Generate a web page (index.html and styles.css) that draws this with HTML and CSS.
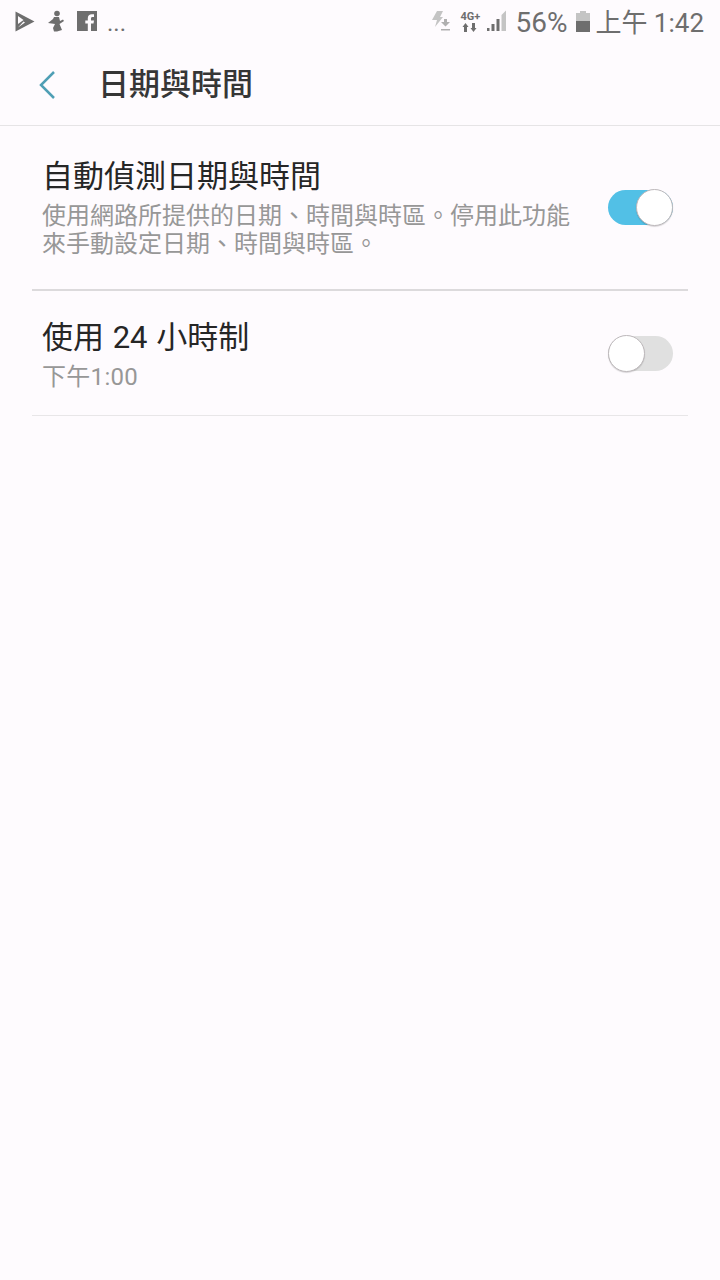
FILE: index.html
```html
<!DOCTYPE html>
<html lang="zh-Hant">
<head>
    <meta charset="UTF-8">
    <meta name="viewport" content="width=device-width, initial-scale=1.0">
    <title>日期與時間</title>
    <link rel="stylesheet" href="styles.css">
</head>
<body>
    <div class="status-bar">
        <div class="status-left">
            <svg class="icon-play" width="20" height="21" viewBox="0 0 20 21"><path d="M0.500 0.500 L19.500 10.500 L0.500 20.500 Z M3 5 V13 L8.500 9 Z M3 16.500 L10 11.500 L8.500 10.500 Z" fill="#6e6e6e" fill-rule="evenodd"/></svg>
            <svg class="icon-run" width="18" height="22" viewBox="0 0 18 22"><circle cx="10" cy="3.500" r="2.800" fill="#6e6e6e"/><path d="M7 7 H12 L13 11 L16 9.500 L17 11 L12.500 14 L15 20 L10 21.500 H7 L6 18 L8 14 L1 13 L6 9 Z" fill="#6e6e6e"/></svg>
            <svg class="icon-fb" width="20" height="20" viewBox="0 0 20 20"><path d="M0 0 H20 V20 H14 V12.500 H16.500 L17 9.500 H14 V7.500 C14 6.600 14.400 6 15.500 6 H17 V3.300 C16.300 3.200 15.500 3.200 14.800 3.200 C12.400 3.200 10.800 4.600 10.800 7.200 V9.500 H8.300 V12.500 H10.800 V20 H0 Z" fill="#6e6e6e"/></svg>
            <span class="dots">...</span>
        </div>
        <div class="status-right">
            <svg width="20" height="22" viewBox="0 0 20 22"><path d="M6 1 H12 L9 7 H12 L4 17 L6 10 H1 Z" fill="#c4c4c4"/><path d="M13 9 H16 V12 H19 L14.500 16.500 L10 12 H13 Z" fill="#b0b0b0"/><rect x="10" y="19" width="9" height="1.500" fill="#b0b0b0"/></svg>
            <div class="net-type">
                <span class="net-label">4G+</span>
                <svg width="16" height="9" viewBox="0 0 16 9"><path d="M2 9 V4 H0.500 L3.500 0 L6.500 4 H5 V9 Z M10 0 V5 H8.500 L11.500 9 L14.500 5 H13 V0 Z" fill="#6e6e6e"/></svg>
            </div>
            <svg class="signal" width="22" height="22" viewBox="0 0 22 22"><path d="M1 21 V18 H3.500 V21 Z M5.500 21 V14 H8.500 V21 Z M10.500 21 V9 H13.500 V21 Z" fill="#6e6e6e"/><path d="M15.500 21 V5 L20 0.500 V21 Z" fill="#c4c4c4"/></svg>
            <span class="status-text pct">56%</span>
            <div class="battery"><div class="battery-cap"></div><div class="battery-body"><div class="battery-level"></div></div></div>
            <span class="status-text time">上午 1:42</span>
        </div>
    </div>

    <div class="app-bar">
        <svg class="back" width="20" height="30" viewBox="0 0 20 30"><path d="M17 2 L4 15 L17 28" fill="none" stroke="#4f9fb5" stroke-width="2.500"/></svg>
        <h1 class="page-title">日期與時間</h1>
    </div>

    <div class="list">
        <div class="row row-first">
            <div class="row-text">
                <div class="row-title title-auto">自動偵測日期與時間</div>
                <div class="row-sub">使用網路所提供的日期、時間與時區。停用此功能<br>來手動設定日期、時間與時區。</div>
            </div>
            <div class="switch on"><div class="knob"></div></div>
        </div>
        <div class="row row-second">
            <div class="row-text">
                <div class="row-title title-24">使用 24 小時制</div>
                <div class="row-sub sub-time">下午1:00</div>
            </div>
            <div class="switch"><div class="knob"></div></div>
        </div>
    </div>
</body>
</html>
```

FILE: styles.css
```css
body {
    margin: 0;
    width: 720px;
    height: 1280px;
    overflow: hidden;
    background-color: #fefbfe;
    font-family: Roboto, "Noto Sans CJK TC", sans-serif;
}

.status-bar {
    height: 44px;
    display: flex;
    justify-content: space-between;
    align-items: center;
    padding: 0 16px 2px 15px;
    box-sizing: border-box;
}

.status-left, .status-right {
    display: flex;
    align-items: center;
}

.icon-run {
    margin-left: 12px;
}

.icon-fb {
    margin-left: 12px;
}

.dots {
    margin-left: 10px;
    font-size: 24px;
    line-height: 24px;
    color: #6e6e6e;
    margin-top: 4px;
}

.net-type {
    display: flex;
    flex-direction: column;
    align-items: center;
    margin-left: 8px;
    width: 22px;
}

.net-label {
    font-size: 11px;
    line-height: 12px;
    font-weight: 700;
    color: #6e6e6e;
}

.signal {
    margin-left: 5px;
}

.status-text {
    font-size: 26px;
    line-height: 32px;
    color: #6e6e6e;
    margin-left: 7px;
    margin-top: 3px;
}

.pct {
    font-size: 28px;
}

.time {
    margin-left: 5px;
}

.battery {
    margin-left: 9px;
    width: 14px;
    display: flex;
    flex-direction: column;
    align-items: center;
}

.battery-cap {
    width: 6px;
    height: 2px;
    background-color: #c4c4c4;
}

.battery-body {
    width: 14px;
    height: 19px;
    background-color: #c4c4c4;
    display: flex;
    align-items: flex-end;
}

.battery-level {
    width: 100%;
    height: 11px;
    background-color: #6e6e6e;
}

.app-bar {
    height: 82px;
    display: flex;
    align-items: center;
    padding-left: 37px;
    box-sizing: border-box;
    border-bottom: 1px solid #e6e4e6;
}

.page-title {
    margin: 0 0 0 41px;
    font-size: 31px;
    font-weight: 500;
    color: #363636;
    line-height: 40px;
}

.list {
    margin: 0 32px;
}

.row {
    display: flex;
    justify-content: space-between;
    box-sizing: border-box;
    padding-left: 10px;
    padding-right: 15px;
}

.row-first {
    height: 165px;
    padding-top: 31px;
    border-bottom: 2px solid #dcdadc;
}

.row-second {
    height: 125px;
    padding-top: 27px;
    border-bottom: 1px solid #e8e6e8;
}

.row-title {
    font-size: 31px;
    line-height: 40px;
    color: #262626;
}

.title-24 {
    word-spacing: 1px;
}

.row-sub {
    font-size: 24px;
    line-height: 28px;
    color: #979797;
}

.row-first .row-sub {
    margin-top: 5px;
}

.row-second .row-sub {
    margin-top: 5px;
}

.sub-time {
    letter-spacing: 0.3px;
}

.switch {
    position: relative;
    width: 65px;
    height: 35px;
    border-radius: 18px;
    background-color: #e0e0e0;
    flex-shrink: 0;
}

.row-first .switch {
    margin-top: 33px;
}

.row-second .switch {
    margin-top: 18px;
}

.switch.on {
    background-color: #52c0e6;
}

.knob {
    position: absolute;
    left: 0;
    top: -1px;
    width: 35px;
    height: 35px;
    border-radius: 50%;
    background-color: #fff;
    border: 1px solid #bdb8bb;
    box-shadow: 0 1px 1px rgba(0, 0, 0, 0.15);
}

.switch.on .knob {
    left: 28px;
}
```
